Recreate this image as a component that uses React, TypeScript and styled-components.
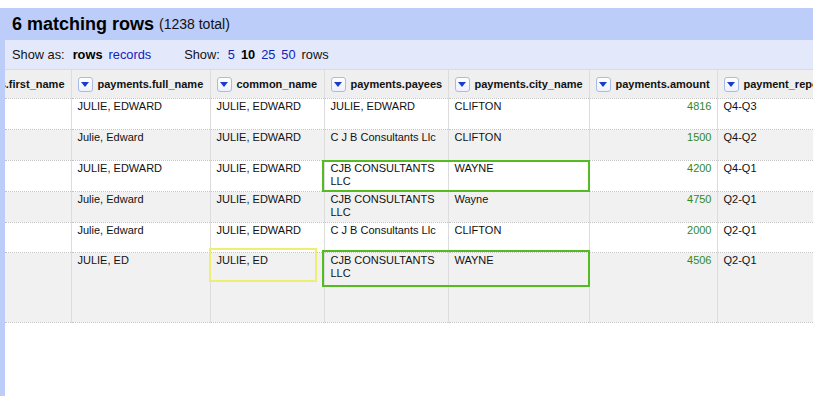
import styled, { createGlobalStyle } from "styled-components";

const GlobalStyle = createGlobalStyle`
  html, body {
    margin: 0;
    padding: 0;
    background: #fff;
    font-family: "Liberation Sans", Arial, Helvetica, sans-serif;
    color: #111;
  }
`;

const Page = styled.div`
  padding-top: 8px;
  height: 396px;
  box-sizing: border-box;
  overflow: hidden;
`;

const Panel = styled.div`
  display: flex;
  flex-direction: column;
  height: 100%;
  background: #bccdfa;
`;

const Summary = styled.div`
  height: 32px;
  padding: 0 12px;
  display: flex;
  align-items: center;
  gap: 5px;
  white-space: nowrap;
`;

const Count = styled.span`
  font-size: 18px;
  font-weight: bold;
  color: #000;
`;

const Total = styled.span`
  font-size: 14px;
  color: #111;
`;

const Body = styled.div`
  flex: 1;
  margin-left: 5px;
  background: #fff;
  overflow: hidden;
`;

const Controls = styled.div`
  height: 29px;
  padding-left: 7px;
  display: flex;
  align-items: center;
  background: #e3e9fb;
  font-size: 12.8px;
  white-space: nowrap;
`;

const Group = styled.div`
  display: flex;
  align-items: center;
  gap: 6px;
  margin-right: 33px;
`;

const Label = styled.span`
  margin-right: 2px;
`;

const Option = styled.span<{ $current?: boolean }>`
  font-weight: ${(p) => (p.$current ? "bold" : "normal")};
  color: ${(p) => (p.$current ? "#000" : "#1122bb")};
`;

const Table = styled.table`
  border-collapse: collapse;
  table-layout: fixed;
  width: 900px;
  font-size: 11px;
  line-height: 13px;
`;

const HeadRow = styled.tr`
  height: 29px;
  background: #efefef;
  border-top: 1px solid #d2dbf3;
  border-bottom: 1px dotted #c4c4c4;
`;

const Th = styled.th`
  padding: 0 6px;
  border-right: 1px solid #dcdcdc;
  text-align: left;
  vertical-align: middle;
  overflow: hidden;
  white-space: nowrap;
`;

const HeadInner = styled.div<{ $clipLeft?: boolean }>`
  display: flex;
  align-items: center;
  justify-content: ${(p) => (p.$clipLeft ? "flex-end" : "flex-start")};
  gap: 5px;
  font-weight: bold;
  color: #111;
`;

const Dropdown = styled.span`
  flex: none;
  width: 13px;
  height: 13px;
  border: 1px solid #aabbe6;
  border-radius: 3px;
  background: linear-gradient(#ffffff, #eef1fb);
  display: flex;
  align-items: center;
  justify-content: center;

  &::after {
    content: "";
    border-top: 5px solid #1a3bd0;
    border-left: 4px solid transparent;
    border-right: 4px solid transparent;
    margin-top: 1px;
  }
`;

const Row = styled.tr<{ $odd: boolean; $height: number }>`
  height: ${(p) => p.$height}px;
  background: ${(p) => (p.$odd ? "#f1f1f1" : "#fff")};
  border-bottom: 1px dotted #c4c4c4;
`;

const Td = styled.td<{ $numeric?: boolean }>`
  position: relative;
  padding: 1px ${(p) => (p.$numeric ? "5px" : "6px")} 2px 6px;
  border-right: 1px solid #dcdcdc;
  vertical-align: top;
  text-align: ${(p) => (p.$numeric ? "right" : "left")};
  color: ${(p) => (p.$numeric ? "#2f8a1f" : "#111")};
  overflow: visible;
`;

const Highlight = styled.div<{
  $color: string;
  $left: number;
  $top: number;
  $width: number;
  $height: number;
}>`
  position: absolute;
  left: ${(p) => p.$left}px;
  top: ${(p) => p.$top}px;
  width: ${(p) => p.$width}px;
  height: ${(p) => p.$height}px;
  box-sizing: border-box;
  border: 2px solid ${(p) => p.$color};
  pointer-events: none;
  z-index: 2;
`;

const columns = [
  { name: "payments.first_name", width: 66 },
  { name: "payments.full_name", width: 139 },
  { name: "common_name", width: 114 },
  { name: "payments.payees", width: 124 },
  { name: "payments.city_name", width: 141 },
  { name: "payments.amount", width: 128 },
  { name: "payment_reporting_period", width: 188 },
];

type Rec = {
  full: string;
  common: string;
  payee: string;
  city: string;
  amount: string;
  period: string;
  height: number;
  green?: { top: number; height: number };
  yellow?: boolean;
};

const rows: Rec[] = [
  { full: "JULIE, EDWARD", common: "JULIE, EDWARD", payee: "JULIE, EDWARD", city: "CLIFTON", amount: "4816", period: "Q4-Q3", height: 31 },
  { full: "Julie, Edward", common: "JULIE, EDWARD", payee: "C J B Consultants Llc", city: "CLIFTON", amount: "1500", period: "Q4-Q2", height: 31 },
  { full: "JULIE, EDWARD", common: "JULIE, EDWARD", payee: "CJB CONSULTANTS LLC", city: "WAYNE", amount: "4200", period: "Q4-Q1", height: 31, green: { top: -1, height: 32 } },
  { full: "Julie, Edward", common: "JULIE, EDWARD", payee: "CJB CONSULTANTS LLC", city: "Wayne", amount: "4750", period: "Q2-Q1", height: 31 },
  { full: "Julie, Edward", common: "JULIE, EDWARD", payee: "C J B Consultants Llc", city: "CLIFTON", amount: "2000", period: "Q2-Q1", height: 30 },
  { full: "JULIE, ED", common: "JULIE, ED", payee: "CJB CONSULTANTS LLC", city: "WAYNE", amount: "4506", period: "Q2-Q1", height: 70, green: { top: -3, height: 37 }, yellow: true },
];

export default function App() {
  return (
    <>
      <GlobalStyle />
      <Page>
        <Panel>
          <Summary>
            <Count>6 matching rows</Count>
            <Total>(1238 total)</Total>
          </Summary>
          <Body>
            <Controls>
              <Group>
                <Label>Show as:</Label>
                <Option $current>rows</Option>
                <Option>records</Option>
              </Group>
              <Group>
                <Label>Show:</Label>
                <Option>5</Option>
                <Option $current>10</Option>
                <Option>25</Option>
                <Option>50</Option>
                <span>rows</span>
              </Group>
            </Controls>
            <Table>
              <colgroup>
                {columns.map((c) => (
                  <col key={c.name} style={{ width: c.width }} />
                ))}
              </colgroup>
              <thead>
                <HeadRow>
                  {columns.map((c, i) => (
                    <Th key={c.name}>
                      <HeadInner $clipLeft={i === 0}>
                        {i > 0 && <Dropdown />}
                        <span>{c.name}</span>
                      </HeadInner>
                    </Th>
                  ))}
                </HeadRow>
              </thead>
              <tbody>
                {rows.map((r, i) => (
                  <Row key={i} $odd={i % 2 === 1} $height={r.height}>
                    <Td />
                    <Td>{r.full}</Td>
                    <Td>
                      {r.yellow && (
                        <Highlight $color="#eeee70" $left={-2} $top={-5} $width={108} $height={34} />
                      )}
                      {r.common}
                    </Td>
                    <Td>
                      {r.green && (
                        <Highlight
                          $color="#55bb22"
                          $left={-3}
                          $top={r.green.top}
                          $width={268}
                          $height={r.green.height}
                        />
                      )}
                      {r.payee}
                    </Td>
                    <Td>{r.city}</Td>
                    <Td $numeric>{r.amount}</Td>
                    <Td>{r.period}</Td>
                  </Row>
                ))}
              </tbody>
            </Table>
          </Body>
        </Panel>
      </Page>
    </>
  );
}
